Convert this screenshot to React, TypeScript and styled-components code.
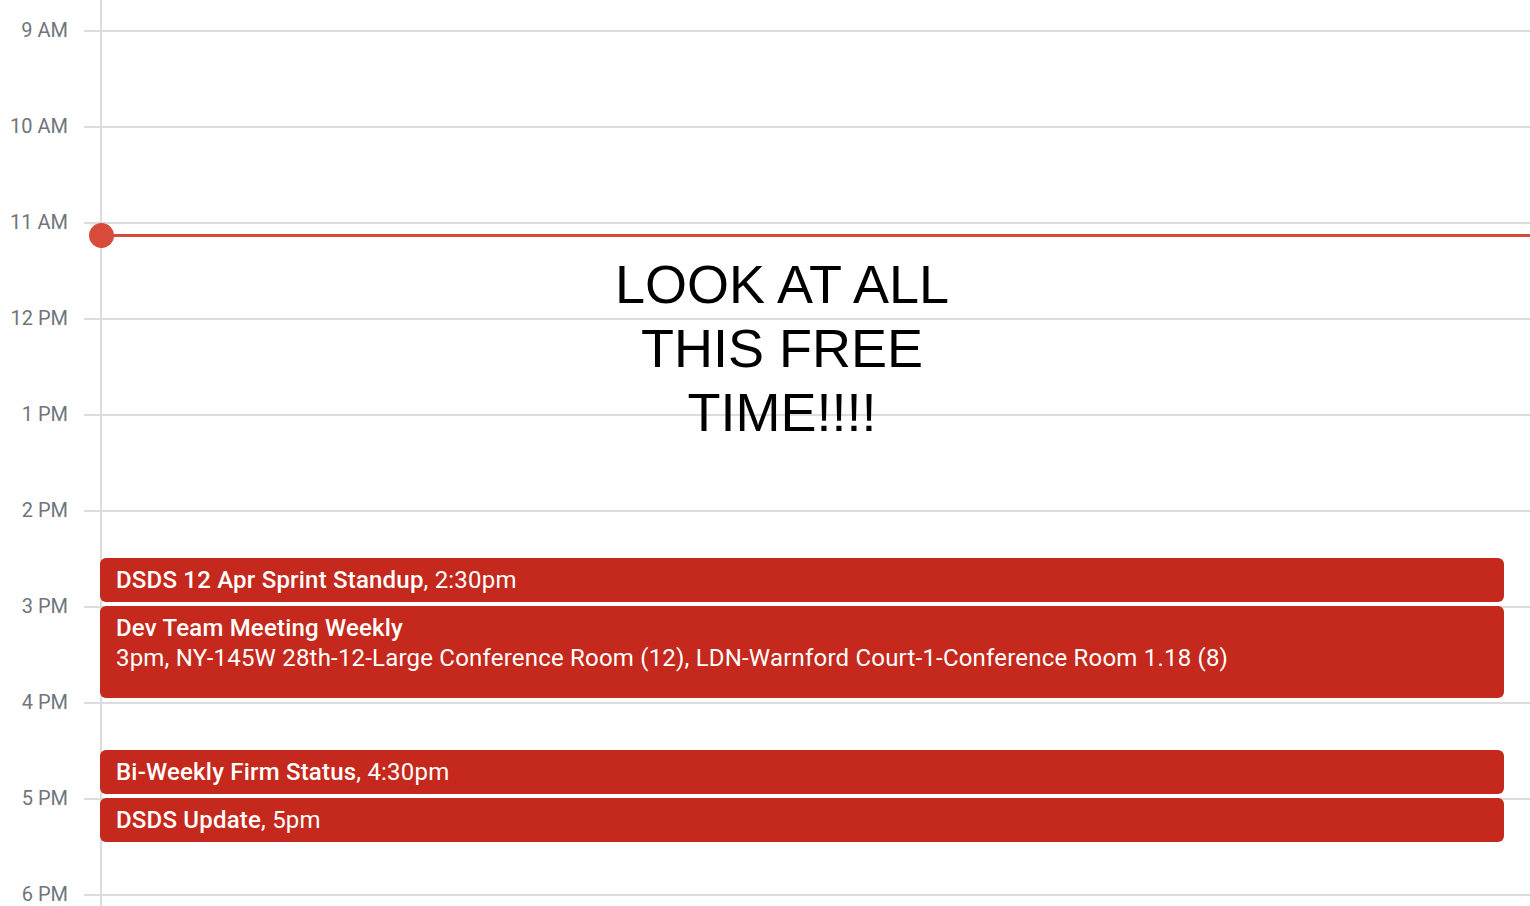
import styled, { createGlobalStyle } from "styled-components";

const HOUR = 96;
const FIRST_LINE = 30;

const hours = ["9 AM", "10 AM", "11 AM", "12 PM", "1 PM", "2 PM", "3 PM", "4 PM", "5 PM", "6 PM"];

type CalEvent = {
  title: string;
  detail: string;
  start: number; // hours after 9am
  length: number; // hours
  stacked?: boolean;
};

const events: CalEvent[] = [
  { title: "DSDS 12 Apr Sprint Standup", detail: "2:30pm", start: 5.5, length: 0.5 },
  {
    title: "Dev Team Meeting Weekly",
    detail: "3pm, NY-145W 28th-12-Large Conference Room (12), LDN-Warnford Court-1-Conference Room 1.18 (8)",
    start: 6,
    length: 1,
    stacked: true,
  },
  { title: "Bi-Weekly Firm Status", detail: "4:30pm", start: 7.5, length: 0.5 },
  { title: "DSDS Update", detail: "5pm", start: 8, length: 0.5 },
];

// current time, in hours after 9am
const nowOffset = 2.14;

export default function App() {
  return (
    <>
      <GlobalStyle />
      <Page>
        <HourList>
          {hours.map((h) => (
            <HourRow key={h}>
              <HourLabel>{h}</HourLabel>
              <HourLine />
            </HourRow>
          ))}
        </HourList>

        <DayColumn>
          {events.map((ev) => (
            <EventCard key={ev.title} $start={ev.start} $length={ev.length}>
              {ev.stacked ? (
                <>
                  <EventTitle>{ev.title}</EventTitle>
                  <div>{ev.detail}</div>
                </>
              ) : (
                <div>
                  <EventTitle>{ev.title}</EventTitle>, {ev.detail}
                </div>
              )}
            </EventCard>
          ))}

          <NowLine style={{ top: FIRST_LINE + nowOffset * HOUR - 1.5 }}>
            <NowDot />
          </NowLine>

          <FreeTime>
            LOOK AT ALL
            <br />
            THIS FREE
            <br />
            TIME!!!!
          </FreeTime>
        </DayColumn>
      </Page>
    </>
  );
}

const GlobalStyle = createGlobalStyle`
  html, body {
    margin: 0;
    padding: 0;
    background: #fff;
  }
  body {
    font-family: Roboto, "Liberation Sans", sans-serif;
  }
`;

const Page = styled.div`
  position: relative;
  width: 1530px;
  height: 906px;
  overflow: hidden;
  background: #fff;
`;

const HourList = styled.div`
  display: flex;
  flex-direction: column;
  margin-top: ${FIRST_LINE + 1 - HOUR / 2}px;
`;

const HourRow = styled.div`
  display: flex;
  align-items: center;
  height: ${HOUR}px;
`;

const HourLabel = styled.div`
  width: 68px;
  padding-right: 16px;
  margin-top: -3px;
  text-align: right;
  font-size: 20px;
  color: #70757a;
  flex-shrink: 0;
`;

const HourLine = styled.div`
  flex: 1;
  height: 2px;
  background: #dadce0;
`;

const DayColumn = styled.div`
  position: absolute;
  top: 0;
  bottom: 0;
  left: 100px;
  right: 0;
  box-sizing: border-box;
  padding: ${FIRST_LINE}px 26px 0 0;
  border-left: 2px solid #dadce0;
  display: grid;
  grid-template-rows: repeat(20, ${HOUR / 2}px);
  align-content: start;
`;

const NowLine = styled.div`
  position: absolute;
  left: 0;
  right: 0;
  height: 3px;
  background: #d84b3b;
`;

const NowDot = styled.div`
  position: absolute;
  left: -13px;
  top: -11px;
  width: 25px;
  height: 25px;
  border-radius: 50%;
  background: #d84b3b;
`;

const FreeTime = styled.div`
  position: absolute;
  top: 252px;
  left: 480px;
  width: 400px;
  text-align: center;
  font-family: "Liberation Sans", Arial, sans-serif;
  font-size: 54px;
  line-height: 64px;
  color: #000;
`;

const EventCard = styled.div<{ $start: number; $length: number }>`
  grid-row: ${(p) => p.$start * 2 + 1} / span ${(p) => p.$length * 2};
  margin: 0 0 4px -2px;
  padding: 7px 16px;
  border-radius: 6px;
  background: #c5281c;
  color: #fff;
  font-size: 24px;
  line-height: 30px;
  letter-spacing: 0.2px;
  white-space: nowrap;
  overflow: hidden;
`;

const EventTitle = styled.span`
  font-weight: 500;
`;
